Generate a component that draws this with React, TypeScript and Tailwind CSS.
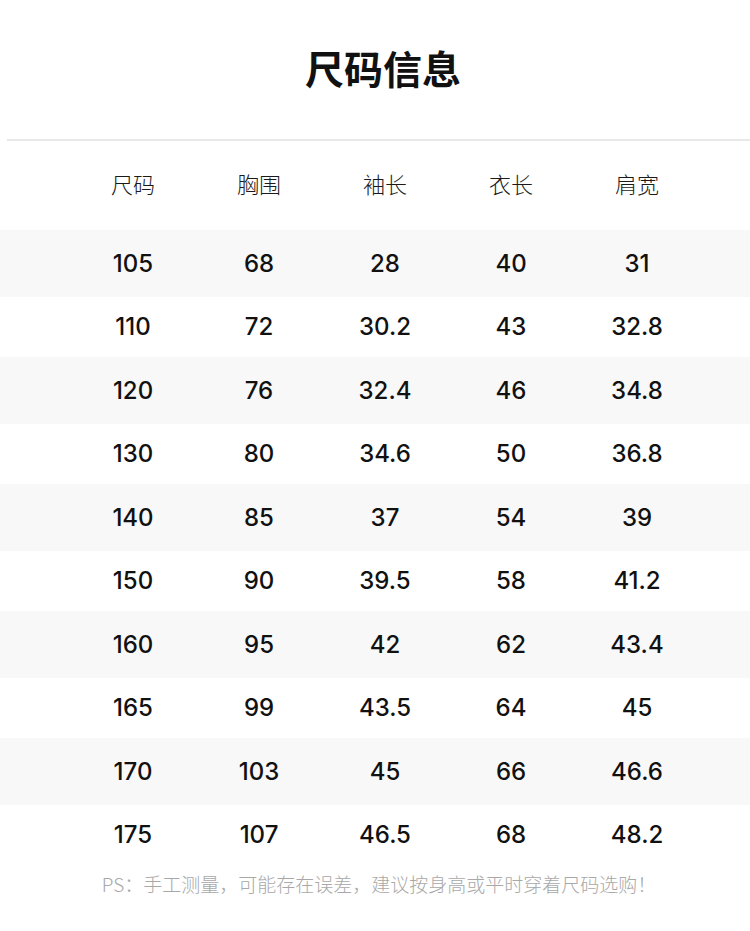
import React from "react";

const rows: string[][] = [
  ["105", "68", "28", "40", "31"],
  ["110", "72", "30.2", "43", "32.8"],
  ["120", "76", "32.4", "46", "34.8"],
  ["130", "80", "34.6", "50", "36.8"],
  ["140", "85", "37", "54", "39"],
  ["150", "90", "39.5", "58", "41.2"],
  ["160", "95", "42", "62", "43.4"],
  ["165", "99", "43.5", "64", "45"],
  ["170", "103", "45", "66", "46.6"],
  ["175", "107", "46.5", "68", "48.2"],
];

const headers = ["尺码", "胸围", "袖长", "衣长", "肩宽"];

export default function App() {
  return (
    <div
      className="w-[750px] h-[931px] bg-white text-black"
      style={{ fontFamily: '"Noto Sans CJK SC", "Noto Sans", sans-serif' }}
    >
      <div className="h-[139px] flex items-center justify-center pl-[16px] pb-[4px]">
        <h1 className="text-[39px] font-bold leading-none text-[#111]">尺码信息</h1>
      </div>
      <div className="ml-[7px] h-[2px] bg-[#e8e8e8]" />
      <div className="h-[89px] grid grid-cols-5 pl-[70px] pr-[50px] items-center">
        {headers.map((h) => (
          <div key={h} className="text-center text-[22px] font-light leading-none text-[#1a1a1a] pb-[6px]">
            {h}
          </div>
        ))}
      </div>
      {rows.map((r, i) => (
        <div
          key={r[0]}
          className={
            i % 2 === 0
              ? "h-[67px] bg-[#f8f8f8] grid grid-cols-5 pl-[70px] pr-[50px] items-center"
              : "h-[60px] bg-white grid grid-cols-5 pl-[70px] pr-[50px] items-center"
          }
        >
          {r.map((c, j) => (
            <div
              key={j}
              className="text-center text-[24px] font-medium leading-none text-[#111]"
              style={{ fontFamily: 'Inter, "Noto Sans", sans-serif' }}
            >
              {c}
            </div>
          ))}
        </div>
      ))}
      <div className="pt-[9px] pl-[8px] text-center text-[19px] leading-none text-[#a8a8a8] font-light">
        PS：手工测量，可能存在误差，建议按身高或平时穿着尺码选购！
      </div>
    </div>
  );
}
